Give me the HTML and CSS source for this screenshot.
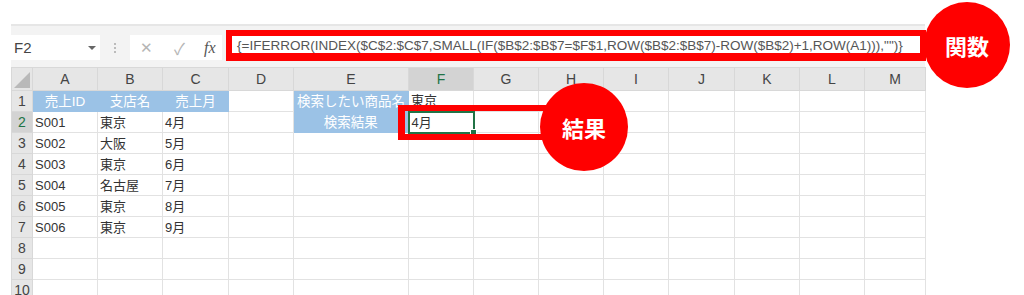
FILE: index.html
```html
<!DOCTYPE html>
<html>
<head>
  <meta charset="utf-8">
  <title>IFERROR INDEX</title>
  <link rel="stylesheet" href="styles.css">
</head>
<body>
  <div id="sheet">
    <div id="toolbar">
      <div class="namebox"><span>F2</span><span class="drop"></span></div>
      <div class="grip"><i></i><i></i><i></i></div>
      <div class="fxbox">
        <span class="cancel">&#x2715;</span>
        <span class="enter">&#x2713;</span>
        <span class="fx">fx</span>
      </div>
      <div class="formula">{=IFERROR(INDEX($C$2:$C$7,SMALL(IF($B$2:$B$7=$F$1,ROW($B$2:$B$7)-ROW($B$2)+1,ROW(A1))),"")}</div>
    </div>
    <table id="grid">
      <colgroup>
        <col class="c-num"><col class="c65"><col class="c65"><col class="c66"><col class="c65"><col class="c115">
        <col class="c65"><col class="c65"><col class="c65"><col class="c65"><col class="c66"><col class="c65"><col class="c65"><col class="c61">
      </colgroup>
      <tr class="cols">
        <th class="corner"></th><th>A</th><th>B</th><th>C</th><th>D</th><th>E</th><th class="sel">F</th>
        <th>G</th><th>H</th><th>I</th><th>J</th><th>K</th><th>L</th><th>M</th>
      </tr>
      <tr>
        <th>1</th><td class="hd">売上ID</td><td class="hd">支店名</td><td class="hd">売上月</td><td></td><td class="hd">検索したい商品名</td><td>東京</td>
        <td></td><td></td><td></td><td></td><td></td><td></td><td></td>
      </tr>
      <tr>
        <th class="sel">2</th><td>S001</td><td>東京</td><td>4月</td><td></td><td class="hd">検索結果</td><td class="active">4月</td>
        <td></td><td></td><td></td><td></td><td></td><td></td><td></td>
      </tr>
      <tr>
        <th>3</th><td>S002</td><td>大阪</td><td>5月</td><td></td><td></td><td></td>
        <td></td><td></td><td></td><td></td><td></td><td></td><td></td>
      </tr>
      <tr>
        <th>4</th><td>S003</td><td>東京</td><td>6月</td><td></td><td></td><td></td>
        <td></td><td></td><td></td><td></td><td></td><td></td><td></td>
      </tr>
      <tr>
        <th>5</th><td>S004</td><td>名古屋</td><td>7月</td><td></td><td></td><td></td>
        <td></td><td></td><td></td><td></td><td></td><td></td><td></td>
      </tr>
      <tr>
        <th>6</th><td>S005</td><td>東京</td><td>8月</td><td></td><td></td><td></td>
        <td></td><td></td><td></td><td></td><td></td><td></td><td></td>
      </tr>
      <tr>
        <th>7</th><td>S006</td><td>東京</td><td>9月</td><td></td><td></td><td></td>
        <td></td><td></td><td></td><td></td><td></td><td></td><td></td>
      </tr>
      <tr>
        <th>8</th><td></td><td></td><td></td><td></td><td></td><td></td>
        <td></td><td></td><td></td><td></td><td></td><td></td><td></td>
      </tr>
      <tr>
        <th>9</th><td></td><td></td><td></td><td></td><td></td><td></td>
        <td></td><td></td><td></td><td></td><td></td><td></td><td></td>
      </tr>
      <tr>
        <th>10</th><td></td><td></td><td></td><td></td><td></td><td></td>
        <td></td><td></td><td></td><td></td><td></td><td></td><td></td>
      </tr>
    </table>
  </div>

  <!-- annotations -->
  <div class="mark mark-formula"></div>
  <div class="badge badge-formula">関数</div>
  <div class="mark mark-result"></div>
  <div class="badge badge-result">結果</div>
</body>
</html>
```

FILE: styles.css
```css
* {
  box-sizing: border-box;
}
body {
  margin: 0;
  width: 1024px;
  height: 295px;
  overflow: hidden;
  position: relative;
  background: #fff;
  font-family: "Liberation Sans", "Noto Sans CJK JP", sans-serif;
  font-size: 14px;
  color: #333;
}
#sheet {
  margin: 24px 0 0 11px;
  width: 914px;
}

/* formula bar */
#toolbar {
  height: 43px;
  background: #f3f3f3;
  border-top: 2px solid #e6e6e6;
  display: flex;
  align-items: flex-start;
  padding-top: 9px;
}
.namebox {
  width: 89px;
  height: 25px;
  background: #fff;
  display: flex;
  align-items: center;
  justify-content: space-between;
  padding: 0 3px 0 3px;
  color: #444;
  font-size: 15px;
}
.drop {
  width: 0;
  height: 0;
  border-left: 4px solid transparent;
  border-right: 4px solid transparent;
  border-top: 4px solid #666;
  margin-right: 1px;
}
.grip {
  width: 30px;
  height: 25px;
  display: flex;
  flex-direction: column;
  align-items: center;
  justify-content: center;
  gap: 2px;
}
.grip i {
  width: 2px;
  height: 2px;
  background: #bbb;
}
.fxbox {
  width: 92px;
  height: 25px;
  background: #fff;
  display: flex;
  align-items: center;
  padding-left: 10px;
  color: #b5b5b5;
}
.cancel {
  font-size: 15px;
  width: 34px;
}
.enter {
  font-size: 16px;
  width: 30px;
}
.fx {
  font-family: "Liberation Serif", serif;
  font-style: italic;
  font-size: 16px;
  color: #555;
}
.formula {
  margin-left: 6px;
  width: 693px;
  height: 25px;
  background: #fff;
  padding: 3px 5px 0 9px;
  color: #555;
  font-size: 13.5px;
  white-space: nowrap;
  overflow: hidden;
}

/* grid */
#grid {
  border-collapse: collapse;
  table-layout: fixed;
  width: 914px;
}
.c-num { width: 21px; }
.c65 { width: 65px; }
.c66 { width: 66px; }
.c115 { width: 115px; }
.c61 { width: 61px; }
#grid tr {
  height: 21px;
}
#grid tr.cols {
  height: 23px;
}
#grid th {
  background: #e6e6e6;
  font-weight: normal;
  color: #444;
  padding: 0;
  border: 1px solid #d8d8d8;
  font-size: 14px;
}
#grid tr th:first-child {
  text-align: center;
}
#grid td {
  border: 1px solid #e2e2e2;
  padding: 0 2px;
  white-space: nowrap;
  overflow: hidden;
  line-height: 19px;
  font-size: 13px;
}
#grid th.sel {
  background: #d3d3d3;
  color: #217346;
}
.cols th.sel {
  border-bottom: 2px solid #217346;
}
tr th.sel:first-child {
  border-right: 2px solid #217346;
}
.corner {
  position: relative;
}
.corner::after {
  content: "";
  position: absolute;
  right: 2px;
  bottom: 2px;
  border-left: 16px solid transparent;
  border-bottom: 16px solid #b9b9b9;
}
#grid td.hd {
  background: #9bc2e6;
  color: #fff;
  text-align: center;
  border-color: #9bc2e6;
  font-size: 13.5px;
}
#grid td.active {
  border: 2px solid #217346;
  position: relative;
  overflow: visible;
}
#grid td.active::after {
  content: "";
  position: absolute;
  right: -4px;
  bottom: -4px;
  width: 5px;
  height: 5px;
  background: #217346;
  border: 1px solid #fff;
}

/* annotations */
.mark {
  position: absolute;
  border: 6px solid #f00;
}
.mark-formula {
  left: 226px;
  top: 30px;
  width: 700px;
  height: 31px;
  border-bottom-width: 8px;
}
.mark-result {
  left: 398px;
  top: 105px;
  width: 160px;
  height: 35px;
  border-left-width: 7px;
}
.badge {
  position: absolute;
  border-radius: 50%;
  background: #f00;
  color: #fff;
  font-family: "Noto Sans CJK JP", sans-serif;
  font-weight: bold;
  font-size: 22px;
  display: flex;
  align-items: center;
  justify-content: center;
}
.badge-formula {
  left: 924px;
  top: 2px;
  width: 86px;
  height: 86px;
}
.badge-result {
  left: 540px;
  top: 83px;
  width: 88px;
  height: 88px;
}
```
